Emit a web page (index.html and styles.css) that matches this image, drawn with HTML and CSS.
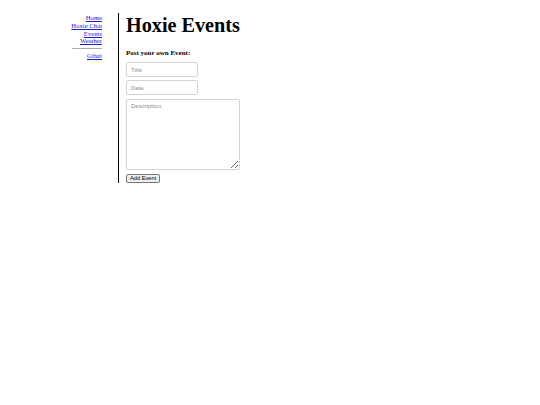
FILE: index.html
```html
<!DOCTYPE html>
<html>
<head>
<meta charset="utf-8">
<link rel="stylesheet" href="styles.css">
</head>
<body>
<div class="page">
  <nav class="side">
    <a href="#">Home</a>
    <a href="#">Hoxie Chat</a>
    <a href="#">Events</a>
    <a href="#">Weather</a>
    <hr class="rule">
    <a href="#" class="small">Github</a>
  </nav>
  <main class="main">
    <h1 class="title">Hoxie Events</h1>
    <h4 class="sub">Post your own Event:</h4>
    <form class="form">
      <input class="field" type="text" placeholder="Title">
      <input class="field" type="text" placeholder="Date">
      <textarea class="area" placeholder="Description"></textarea>
      <button class="btn" type="button">Add Event</button>
    </form>
  </main>
</div>
</body>
</html>
```
FILE: styles.css
```css
html, body { margin: 0; padding: 0; background: #fff; }
body { font-family: "Liberation Serif", "Times New Roman", serif; color: #000; }
.page { display: flex; align-items: flex-start; padding-top: 13px; }
.side { width: 102px; display: flex; flex-direction: column; align-items: flex-end; padding-top: 1px; }
.side a { color: #1a1ad0; text-decoration: underline; font-size: 6.7px; line-height: 7.8px; }
.side a.small { font-size: 5.4px; line-height: 7px; }
.rule { width: 30px; align-self: flex-end; margin: 3px 0 4px 0; border: 0; border-top: 1px solid #aaa; height: 0; }
.main { margin-left: 16px; border-left: 1px solid #000; padding-left: 7px; height: 170px; box-sizing: border-box; }
.title { margin: 0; font-size: 20.2px; line-height: 24px; font-weight: bold; }
.sub { margin: 12px 0 4px 0; font-size: 7px; line-height: 9px; font-weight: bold; }
.form { display: flex; flex-direction: column; align-items: flex-start; }
.field, .area { font-family: "Liberation Sans", Arial, sans-serif; font-size: 6px; border: 1px solid #d4d4d4; border-radius: 2px; box-sizing: border-box; padding: 2px 4px; margin: 0; color: #333; }
.field::placeholder, .area::placeholder { color: #8a8a8a; }
.field { width: 72px; height: 15px; margin-bottom: 3px; }
.area { width: 114px; height: 71px; margin-top: 1px; resize: vertical; padding-top: 3px; }
.btn { margin-top: 4px; font-family: "Liberation Sans", Arial, sans-serif; font-size: 5.7px; line-height: 7px; padding: 0 3px; height: 9px; border: 1px solid #767676; border-radius: 2px; background: #efefef; color: #000; }
```
